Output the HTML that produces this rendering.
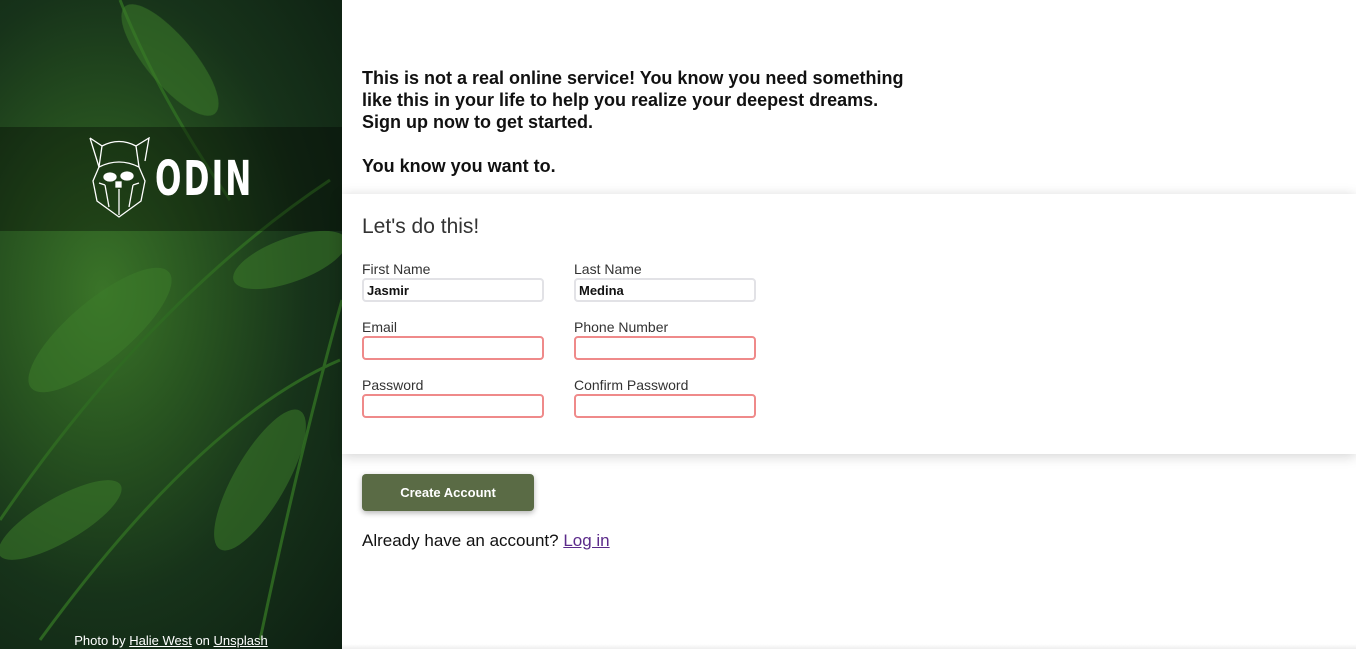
<!DOCTYPE html>
<html><head><style>
*{box-sizing:border-box;margin:0;padding:0}
body{width:1356px;height:649px;overflow:hidden;font-family:"Liberation Sans",sans-serif;background:#fff;position:relative}
.left{position:absolute;left:0;top:0;width:342px;height:649px;overflow:hidden;
background:radial-gradient(ellipse at 30% 45%,#3a7428 0%,#285420 30%,#17331a 60%,#0d1f12 100%)}
.band{position:absolute;left:0;top:127px;width:342px;height:104px;background:rgba(0,0,0,0.35)}
.credit{position:absolute;left:0;width:342px;bottom:1px;text-align:center;color:#fff;font-size:13px}
.credit u{color:#fff}
.intro{position:absolute;left:362px;top:67px;font-size:18px;font-weight:bold;color:#111;line-height:22px}
.card{position:absolute;left:342px;top:194px;width:1014px;height:260px;background:#fff;box-shadow:0 2px 12px rgba(0,0,0,0.18)}
h2{position:absolute;left:20px;top:21px;font-size:21px;font-weight:normal;color:#333}
.f{position:absolute;width:182px}
.f label{display:block;font-size:14px;color:#333;height:17px}
.f div{height:24px;border:2px solid #e2e2e6;border-radius:4px;font-size:13px;font-weight:bold;padding:3px 3px;color:#111}
.f div.r{border-color:#ef8a8a}
.btn{position:absolute;left:362px;top:474px;width:172px;height:37px;background:#5a6b45;color:#fff;font-size:13px;font-weight:bold;text-align:center;line-height:38px;border-radius:4px;box-shadow:0 2px 6px rgba(0,0,0,.3)}
.login{position:absolute;left:362px;top:531px;font-size:17px;color:#111}
.login u{color:#5b2a8a}
</style></head><body>
<div class="left">
<svg width="342" height="649" style="position:absolute;left:0;top:0" fill="none">
<g stroke="#2f6a22" stroke-width="3" opacity=".9">
<path d="M0 520 Q150 300 330 180"/><path d="M40 640 Q200 420 340 360"/><path d="M120 0 Q160 100 230 200"/><path d="M260 640 Q300 450 342 300"/>
</g>
<g fill="#3d7d2b" opacity=".55">
<ellipse cx="100" cy="330" rx="90" ry="30" transform="rotate(-40 100 330)"/>
<ellipse cx="260" cy="480" rx="80" ry="26" transform="rotate(-60 260 480)"/>
<ellipse cx="170" cy="60" rx="70" ry="24" transform="rotate(50 170 60)"/>
<ellipse cx="60" cy="520" rx="70" ry="22" transform="rotate(-30 60 520)"/>
<ellipse cx="290" cy="260" rx="60" ry="22" transform="rotate(-20 290 260)"/>
</g>
</svg>
<div class="band"></div>
<svg width="62" height="82" viewBox="0 0 62 82" style="position:absolute;left:89px;top:137px" fill="none" stroke="#fff" stroke-width="1.3">
<path d="M1 1 L13 9 L10 30 L4 44 L8 64 L30 80 L52 64 L56 44 L50 30 L47 9 L60 1 L56 24"/>
<path d="M1 1 L10 30 M13 9 Q30 0 47 9 M10 30 Q30 20 50 30"/>
<ellipse cx="21" cy="40" rx="6" ry="4" fill="#fff"/><ellipse cx="38" cy="39" rx="6" ry="4" fill="#fff"/>
<rect x="27" y="45" width="5" height="5" fill="#fff"/>
<path d="M16 48 L20 70 M30 52 L30 78 M44 48 L40 70 M10 46 L16 48 M50 46 L44 48"/>
</svg>
<div style="position:absolute;left:155px;top:151px;color:#fff;font-size:48px;font-weight:bold;letter-spacing:3px;font-family:'DejaVu Sans Condensed','Liberation Sans',sans-serif;transform:scaleX(.72);transform-origin:left">ODIN</div>
<div class="credit">Photo by <u>Halie West</u> on <u>Unsplash</u></div>
</div>
<div class="intro">This is not a real online service! You know you need something<br>like this in your life to help you realize your deepest dreams.<br>Sign up now to get started.<br><br>You know you want to.</div>
<div class="card">
<h2>Let's do this!</h2>
<div class="f" style="left:20px;top:67px"><label>First Name</label><div>Jasmir</div></div>
<div class="f" style="left:232px;top:67px"><label>Last Name</label><div>Medina</div></div>
<div class="f" style="left:20px;top:125px"><label>Email</label><div class="r"></div></div>
<div class="f" style="left:232px;top:125px"><label>Phone Number</label><div class="r"></div></div>
<div class="f" style="left:20px;top:183px"><label>Password</label><div class="r"></div></div>
<div class="f" style="left:232px;top:183px"><label>Confirm Password</label><div class="r"></div></div>
</div>
<div class="btn">Create Account</div>
<div class="login">Already have an account? <u>Log in</u></div>
<div style="position:absolute;left:342px;top:644px;width:1014px;height:5px;background:linear-gradient(#fff,#eee)"></div>
</body></html>
